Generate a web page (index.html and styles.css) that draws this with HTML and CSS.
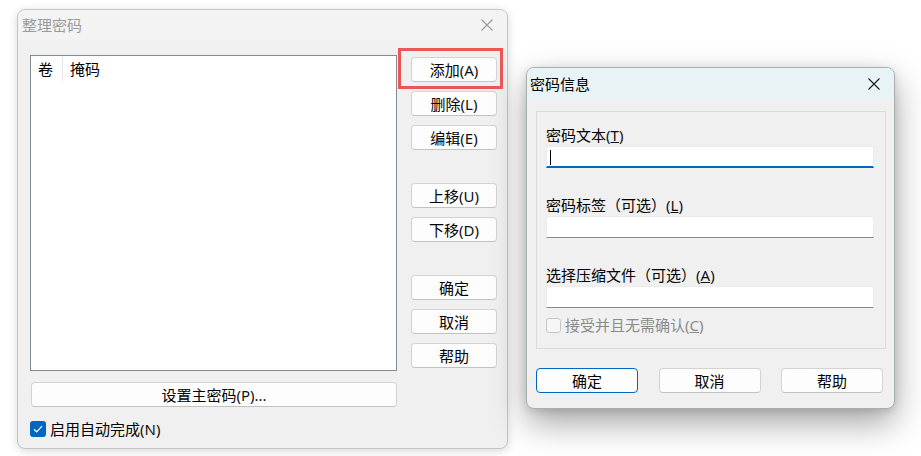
FILE: index.html
```html
<!DOCTYPE html>
<html lang="zh-CN">
<head>
<meta charset="utf-8">
<title>整理密码</title>
<link rel="stylesheet" href="styles.css">
</head>
<body>
<div class="desktop">
  <section class="win win-organize">
    <header class="titlebar titlebar-inactive">
      <span class="title">整理密码</span>
      <span class="close close-inactive">
        <svg width="12" height="12" viewBox="0 0 12 12"><path d="M0.5 0.5 L11.5 11.5 M11.5 0.5 L0.5 11.5" stroke="currentColor" stroke-width="1.1" fill="none"/></svg>
      </span>
    </header>
    <div class="org-body">
      <div class="org-main">
        <div class="listbox">
          <div class="list-header">
            <span class="col col-vol">卷</span>
            <span class="col col-mask">掩码</span>
          </div>
        </div>
        <div class="btncol">
          <button class="btn btn-side">添加<span class="mn">(A)</span></button>
          <button class="btn btn-side">删除<span class="mn">(L)</span></button>
          <button class="btn btn-side">编辑<span class="mn">(E)</span></button>
          <button class="btn btn-side btn-group-start">上移<span class="mn">(U)</span></button>
          <button class="btn btn-side">下移<span class="mn">(D)</span></button>
          <button class="btn btn-side btn-group-start">确定</button>
          <button class="btn btn-side">取消</button>
          <button class="btn btn-side">帮助</button>
        </div>
      </div>
      <button class="btn btn-wide">设置主密码<span class="mn">(P)...</span></button>
      <label class="check check-auto">
        <span class="box box-checked">
          <svg width="10" height="8" viewBox="0 0 10 8"><path d="M1 4.2 L3.7 6.8 L9 1.2" stroke="#fff" stroke-width="1.2" fill="none"/></svg>
        </span>
        <span class="check-text">启用自动完成<span class="mn">(N)</span></span>
      </label>
    </div>
  </section>

  <section class="win win-info">
    <header class="titlebar titlebar-active">
      <span class="title">密码信息</span>
      <span class="close close-active">
        <svg width="12" height="12" viewBox="0 0 12 12"><path d="M0.5 0.5 L11.5 11.5 M11.5 0.5 L0.5 11.5" stroke="currentColor" stroke-width="1.1" fill="none"/></svg>
      </span>
    </header>
    <div class="info-body">
      <div class="groupbox">
        <div class="field">
          <div class="field-label">密码文本<span class="mn">(<u>T</u>)</span></div>
          <div class="field-input field-focused"><span class="caret"></span></div>
        </div>
        <div class="field">
          <div class="field-label">密码标签（可选）<span class="mn">(<u>L</u>)</span></div>
          <div class="field-input"></div>
        </div>
        <div class="field">
          <div class="field-label">选择压缩文件（可选）<span class="mn">(<u>A</u>)</span></div>
          <div class="field-input"></div>
        </div>
        <label class="check check-disabled">
          <span class="box box-disabled"></span>
          <span class="check-text">接受并且无需确认<span class="mn">(<u>C</u>)</span></span>
        </label>
      </div>
      <div class="info-buttons">
        <button class="btn btn-dlg btn-default">确定</button>
        <button class="btn btn-dlg">取消</button>
        <button class="btn btn-dlg">帮助</button>
      </div>
    </div>
  </section>

  <div class="annot"></div>
</div>
</body>
</html>
```

FILE: styles.css
```css
html, body {
  margin: 0;
  padding: 0;
  background: #ffffff;
}

body {
  font-family: "Noto Sans", "Noto Sans CJK SC", sans-serif;
  font-size: 15px;
  line-height: 20px;
  color: #000;
}

.desktop {
  position: relative;
  width: 921px;
  height: 456px;
  overflow: hidden;
  background: #ffffff;
}

/* windows */
.win {
  position: absolute;
  box-sizing: border-box;
  background: #f0f0f0;
  border-radius: 8px;
  overflow: hidden;
  display: flex;
  flex-direction: column;
}

.win-organize {
  left: 17px;
  top: 9px;
  width: 491px;
  height: 440px;
  border: 1px solid #c4c4c4;
  box-shadow: 0 2px 10px rgba(0, 0, 0, 0.16);
}

.win-info {
  left: 526px;
  top: 67px;
  width: 369px;
  height: 342px;
  border: 1px solid #a9aeb0;
  box-shadow: 0 14px 34px rgba(0, 0, 0, 0.36), 0 2px 8px rgba(0, 0, 0, 0.12);
}

.titlebar {
  display: flex;
  align-items: center;
  justify-content: space-between;
  flex: none;
}

.titlebar-inactive {
  height: 30px;
  background: #f3f3f3;
  padding-left: 4px;
}

.titlebar-active {
  height: 31px;
  background: #e8f3f5;
  padding-left: 3px;
}

.titlebar-inactive .title {
  color: #9a9a9a;
}

.titlebar-active .title {
  color: #000;
}

.close {
  display: flex;
  align-items: center;
  justify-content: center;
  height: 100%;
}

.close-inactive {
  width: 41px;
  color: #9a9a9a;
}

.close-active {
  width: 41px;
  color: #1a1a1a;
}

/* organize dialog body */
.org-body {
  display: flex;
  flex-direction: column;
  align-items: flex-start;
  padding: 15px 0 0 12px;
}

.org-main {
  display: flex;
  gap: 14px;
}

.listbox {
  box-sizing: border-box;
  width: 367px;
  height: 316px;
  background: #ffffff;
  border: 1px solid #858991;
}

.list-header {
  display: flex;
  height: 25px;
  align-items: stretch;
}

.col {
  display: flex;
  align-items: center;
  padding-left: 7px;
  box-sizing: border-box;
}

.col-vol {
  width: 32px;
  border-right: 1px solid #e5e5e5;
}

.col-mask {
  flex: 1;
}

.btncol {
  display: flex;
  flex-direction: column;
  gap: 9px;
  padding-top: 2px;
}

.btn {
  box-sizing: border-box;
  height: 25px;
  padding: 0;
  margin: 0;
  background: #fdfdfd;
  border: 1px solid #d3d3d3;
  border-bottom-color: #c2c2c2;
  border-radius: 4px;
  font: inherit;
  line-height: 22px;
  color: #000;
  text-align: center;
}

.btn-side {
  width: 86px;
}

.btn-group-start {
  margin-top: 24px;
}

.btn-wide {
  width: 366px;
  margin-top: 11px;
  margin-left: 1px;
}

.mn {
  color: #111;
}

.check {
  display: flex;
  align-items: center;
  height: 20px;
}

.check-auto {
  margin-top: 12px;
  gap: 4px;
}

.box {
  box-sizing: border-box;
  display: flex;
  align-items: center;
  justify-content: center;
  border-radius: 3px;
  flex: none;
}

.box-checked {
  width: 16px;
  height: 16px;
  background: #0067c0;
}

.box-disabled {
  width: 15px;
  height: 15px;
  background: #f6f6f6;
  border: 1px solid #c6c6c6;
}

/* info dialog body */
.info-body {
  display: flex;
  flex-direction: column;
  padding: 12px 8px 0 9px;
}

.groupbox {
  box-sizing: border-box;
  width: 350px;
  height: 238px;
  border: 1px solid #dadada;
  padding: 13px 0 0 9px;
  display: flex;
  flex-direction: column;
}

.field + .field {
  margin-top: 27px;
}

.field-label {
  height: 20px;
  margin-bottom: 1px;
}

.field-input {
  box-sizing: border-box;
  width: 328px;
  height: 22px;
  background: #ffffff;
  border: 1px solid #ececec;
  border-bottom: 1px solid #8a8a8a;
  border-radius: 3px 3px 0 0;
  display: flex;
  align-items: center;
  padding-left: 3px;
}

.field-focused {
  border-bottom: 2px solid #0067c0;
  padding-top: 1px;
}

.caret {
  display: block;
  width: 1px;
  height: 15px;
  background: #000;
}

.check-disabled {
  margin-top: 7px;
  gap: 4px;
  color: #8a8a8a;
}

.check-disabled .mn {
  color: #8a8a8a;
}

.info-buttons {
  display: flex;
  justify-content: space-between;
  width: 347px;
  margin-top: 19px;
}

.btn-dlg {
  width: 102px;
}

.btn-default {
  border: 1px solid #0067c0;
}

/* annotation overlay */
.annot {
  position: absolute;
  left: 398px;
  top: 48px;
  width: 105px;
  height: 41px;
  box-sizing: border-box;
  border: 3px solid #ee5656;
  pointer-events: none;
}
```
